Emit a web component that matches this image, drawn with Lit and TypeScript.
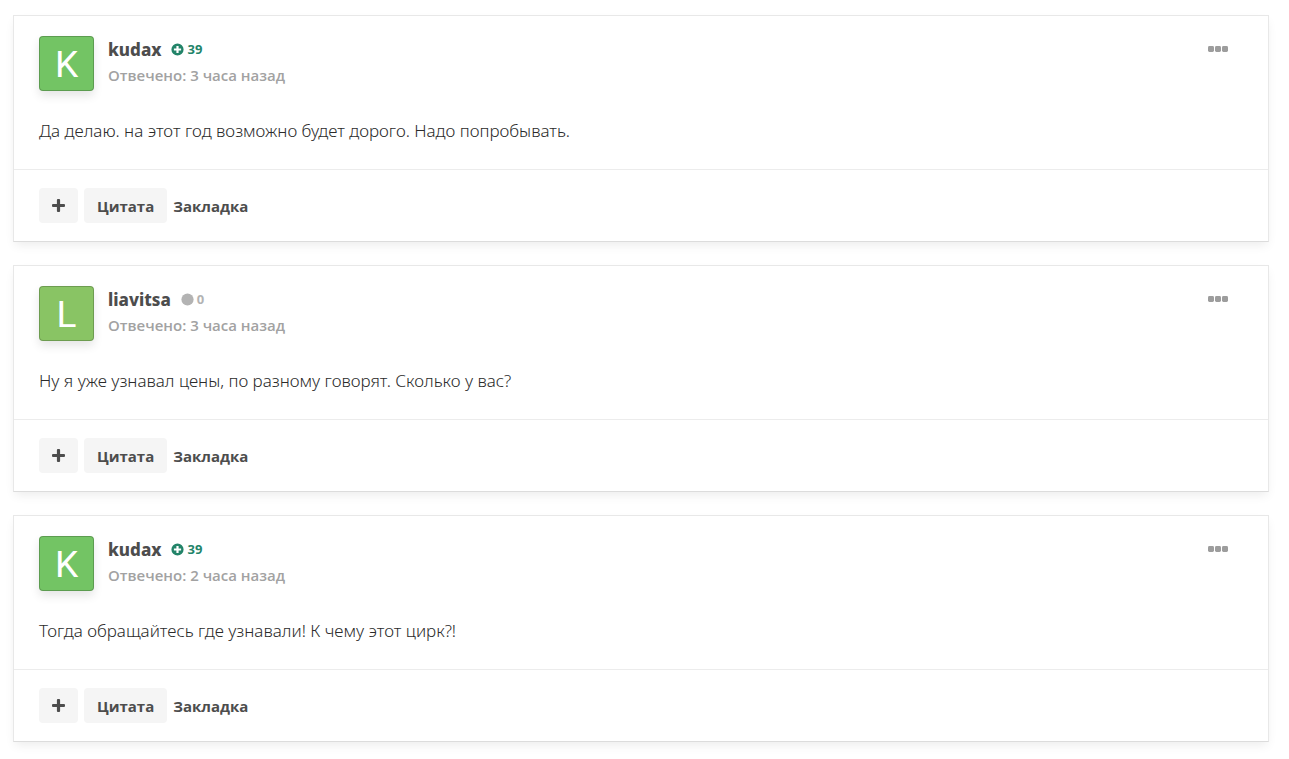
import { LitElement, html, css, svg } from "lit";
import { customElement, property } from "lit/decorators.js";
import { classMap } from "lit/directives/class-map.js";

interface Post {
  author: string;
  tone: string;
  reputation: number;
  time: string;
  text: string;
}

const POSTS: Post[] = [
  {
    author: "kudax",
    tone: "green",
    reputation: 39,
    time: "3 часа назад",
    text: "Да делаю. на этот год возможно будет дорого. Надо попробывать.",
  },
  {
    author: "liavitsa",
    tone: "lime",
    reputation: 0,
    time: "3 часа назад",
    text: "Ну я уже узнавал цены, по разному говорят. Сколько у вас?",
  },
  {
    author: "kudax",
    tone: "green",
    reputation: 39,
    time: "2 часа назад",
    text: "Тогда обращайтесь где узнавали! К чему этот цирк?!",
  },
];

@customElement("forum-post")
export class ForumPost extends LitElement {
  @property({ attribute: false }) post!: Post;

  static styles = css`
    :host {
      display: block;
    }
    .card {
      background: #fff;
      border: 1px solid #e8e8e8;
      border-bottom-color: #dcdcdc;
      box-shadow: 0 5px 10px -2px rgba(0, 0, 0, 0.08);
    }
    .head {
      display: flex;
      align-items: flex-start;
      padding: 20px 40px 0 25px;
    }
    .avatar {
      box-sizing: border-box;
      flex: none;
      display: flex;
      align-items: center;
      justify-content: center;
      width: 55px;
      height: 55px;
      margin-right: 14px;
      padding-top: 2px;
      border: 1px solid rgba(0, 0, 0, 0.2);
      border-radius: 4px;
      box-shadow: 0 5px 10px rgba(0, 0, 0, 0.1);
      color: #fff;
      font: 37px/52px Roboto, sans-serif;
      text-decoration: none;
    }
    .green {
      background: #73c464;
    }
    .lime {
      background: #89c464;
    }
    .info {
      flex: 1;
    }
    .line {
      display: flex;
      align-items: center;
      height: 26px;
    }
    .name {
      color: #4d4d4d;
      font-family: "Noto Sans", sans-serif;
      font-size: 17px;
      font-weight: 800;
      text-decoration: none;
    }
    .rep {
      display: flex;
      align-items: center;
      gap: 3px;
      margin-left: 10px;
      color: #238469;
      font-size: 13px;
      font-weight: 700;
    }
    .none {
      color: #b3b3b3;
    }
    .time {
      color: #a2a2a2;
      font-size: 15px;
      font-weight: 600;
      line-height: 27px;
    }
    button {
      border: 0;
      background: none;
      color: #4d4d4d;
      font: inherit;
      cursor: pointer;
    }
    svg {
      display: block;
      fill: currentColor;
    }
    .more {
      display: flex;
      align-items: center;
      height: 26px;
      padding: 0;
      color: #9d9d9d;
    }
    .text {
      margin: 0;
      padding: 26px 25px 24px;
      color: #2b2b2b;
      font-family: "Noto Sans", sans-serif;
      font-size: 17px;
      font-weight: 300;
      line-height: 28px;
    }
    .foot {
      display: flex;
      gap: 6px;
      padding: 18px 25px;
      border-top: 1px solid #ececec;
    }
    .action {
      display: flex;
      align-items: center;
      height: 35px;
      padding: 0 13px;
      border-radius: 4px;
      background: #f5f5f5;
      font-size: 15px;
      font-weight: 700;
    }
    .plain {
      padding: 0;
      background: none;
    }
  `;

  render() {
    const p = this.post;
    const positive = p.reputation > 0;
    return html`
      <article class="card">
        <header class="head">
          <a class="avatar ${p.tone}" href="#" aria-label=${p.author}>${p.author[0].toUpperCase()}</a>
          <div class="info">
            <div class="line">
              <a class="name" href="#">${p.author}</a>
              <span class=${classMap({ rep: true, none: !positive })}>
                <svg width="13" height="13" viewBox="0 0 13 13" aria-hidden="true">
                  ${positive
                    ? svg`<path fill-rule="evenodd" d="M6.5.4a6.1 6.1 0 1 0 0 12.2a6.1 6.1 0 0 0 0-12.2zM5.4 2.9h2.2v2.5h2.5v2.2H7.6v2.5H5.4V7.6H2.9V5.4h2.5z" />`
                    : svg`<circle cx="6.5" cy="6.5" r="6.1" />`}
                </svg>
                ${p.reputation}
              </span>
            </div>
            <div class="time">Отвечено: ${p.time}</div>
          </div>
          <button class="more" aria-label="Ещё">
            <svg width="20" height="6" viewBox="0 0 20 6" aria-hidden="true">
              <rect width="6" height="6" rx="1.4" />
              <rect x="7" width="6" height="6" rx="1.4" />
              <rect x="14" width="6" height="6" rx="1.4" />
            </svg>
          </button>
        </header>
        <p class="text">${p.text}</p>
        <footer class="foot">
          <button class="action" aria-label="Плюс">
            <svg width="13" height="13" viewBox="0 0 13 13" aria-hidden="true">
              <path d="M5.900 0h1.200q1 0 1 1v3.900H12q1 0 1 1v1.200q0 1-1 1H8.100V12q0 1-1 1H5.900q-1 0-1-1V8.100H1q-1 0-1-1V5.900q0-1 1-1h3.900V1q0-1 1-1z" />
            </svg>
          </button>
          <button class="action">Цитата</button>
          <button class="action plain">Закладка</button>
        </footer>
      </article>
    `;
  }
}

@customElement("app-root")
export class AppRoot extends LitElement {
  static styles = css`
    :host {
      display: block;
      background: #fff;
      font-family: "Open Sans", "Noto Sans", sans-serif;
    }
    .feed {
      display: flex;
      flex-direction: column;
      gap: 23px;
      padding: 15px 20px 16px 13px;
    }
  `;

  render() {
    return html`
      <main class="feed">
        ${POSTS.map((p) => html`<forum-post .post=${p}></forum-post>`)}
      </main>
    `;
  }
}
